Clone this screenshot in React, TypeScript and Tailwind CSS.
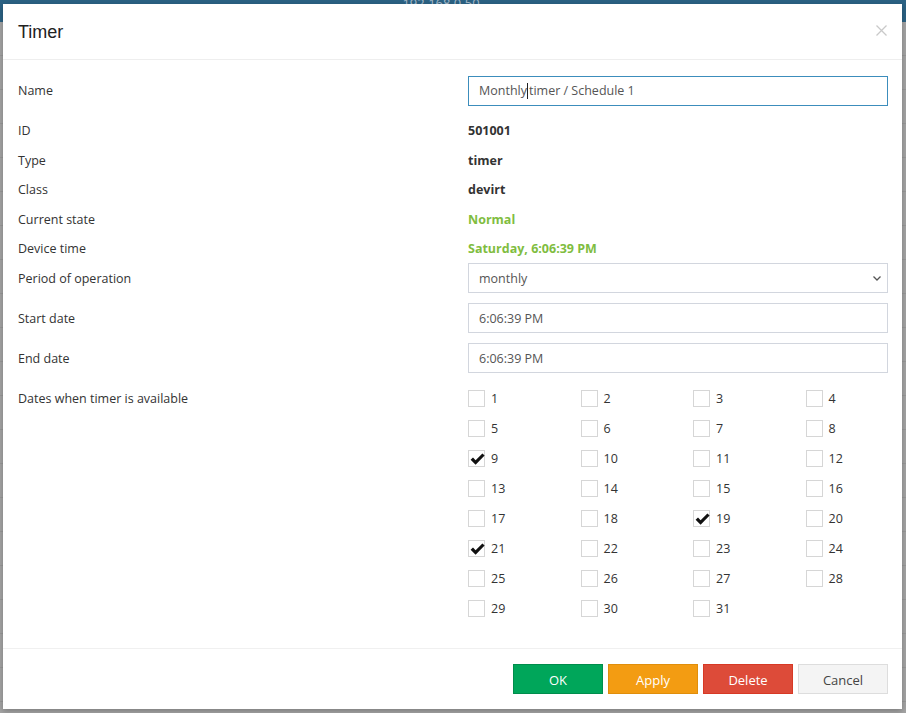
import React from "react";

const checked = new Set([9, 19, 21]);

function Check() {
  return (
    <svg width="15" height="13" viewBox="0 0 15 13" className="absolute left-[1px] top-[2px]">
      <path d="M0.6 6.8 L3 4.4 L5.6 7.2 L12.4 0.4 L14.6 2.6 L5.6 11.8 Z" fill="#111" />
    </svg>
  );
}

function Box({ n }: { n: number }) {
  const on = checked.has(n);
  return (
    <div className="flex h-[30px] items-center">
      <div className="relative h-[17px] w-[17px] shrink-0 border border-[#d6d6d6] bg-white">{on && <Check />}</div>
      <span className="ml-[6px] pt-[2px] text-[12.5px] text-[#333]">{n}</span>
    </div>
  );
}

function TextRow({ label, value, green }: { label: string; value: string; green?: boolean }) {
  return (
    <div className="flex h-[29.5px] items-center pt-[4px]">
      <div className="w-[450px] shrink-0 text-[#333]">{label}</div>
      <div className={"font-bold " + (green ? "text-[#80bd3f]" : "text-[#333]")}>{value}</div>
    </div>
  );
}

export default function App() {
  const days = Array.from({ length: 31 }, (_, i) => i + 1);
  return (
    <div className="relative h-[713px] w-[906px] overflow-hidden bg-[#a4a4a4]" style={{ fontFamily: '"Open Sans", "Noto Sans", sans-serif' }}>
      <div className="flex h-[22px] items-start justify-center bg-[#2b6284]">
        <span className="-mt-[6px] -ml-[24px] text-[13px] text-[#a9bccb]">192.168.0.50</span>
      </div>
      <div className="flex flex-col">
        {Array.from({ length: 20 }, (_, i) => (
          <div key={i} className="h-[34px] border-b border-[#989898]" />
        ))}
      </div>

      <div className="absolute left-[3px] top-[4px] flex h-[705px] w-[899px] flex-col bg-white text-[12.5px] shadow-[0_2px_6px_rgba(0,0,0,0.25)]">
        <div className="flex h-[56px] items-center justify-between border-b border-[#eeeeee] pl-[15px] pr-[15px]">
          <span className="pt-[2px] text-[18px] text-[#222]" style={{ fontFamily: '"Liberation Sans", Arial, sans-serif' }}>Timer</span>
          <svg width="11" height="11" viewBox="0 0 11 11" className="-mt-[2px]">
            <path d="M0.5 0.5 L10.5 10.5 M10.5 0.5 L0.5 10.5" stroke="#c9c9c9" strokeWidth="1.3" />
          </svg>
        </div>

        <div className="flex-1 pl-[15px] pr-[14px] pt-[16px]">
          <div className="mb-[9px] flex h-[30px] items-center">
            <div className="w-[450px] shrink-0 text-[#333]">Name</div>
            <div className="flex h-[30px] w-[420px] items-center border border-[#3c8dbc] px-[10px] text-[#555]">
              Monthly<span className="mx-[0.5px] inline-block h-[16px] w-px bg-[#222]" />timer / Schedule 1
            </div>
          </div>
          <TextRow label="ID" value="501001" />
          <TextRow label="Type" value="timer" />
          <TextRow label="Class" value="devirt" />
          <TextRow label="Current state" value="Normal" green />
          <TextRow label="Device time" value="Saturday, 6:06:39 PM" green />

          <div className="flex h-[30px] items-center">
            <div className="w-[450px] shrink-0 pt-[4px] text-[#333]">Period of operation</div>
            <div className="flex h-[30px] w-[420px] items-center justify-between border border-[#d2d6de] pl-[10px] pr-[4px] text-[#555]">
              <span className="pt-[4px]">monthly</span>
              <svg width="12" height="12" viewBox="0 0 12 12">
                <path d="M2.5 4.5 L6 8 L9.5 4.5" fill="none" stroke="#555" strokeWidth="1.3" />
              </svg>
            </div>
          </div>
          <div className="mt-[10px] flex h-[30px] items-center">
            <div className="w-[450px] shrink-0 pt-[4px] text-[#333]">Start date</div>
            <div className="flex h-[30px] w-[420px] items-center border border-[#d2d6de] px-[10px] pt-[4px] text-[#555]">6:06:39 PM</div>
          </div>
          <div className="mt-[10px] flex h-[30px] items-center">
            <div className="w-[450px] shrink-0 pt-[4px] text-[#333]">End date</div>
            <div className="flex h-[30px] w-[420px] items-center border border-[#d2d6de] px-[10px] pt-[4px] text-[#555]">6:06:39 PM</div>
          </div>

          <div className="mt-[11px] flex">
            <div className="flex h-[30px] w-[450px] shrink-0 items-center pt-[2px] text-[#333]">Dates when timer is available</div>
            <div className="grid grid-cols-[repeat(4,112.5px)]">
              {days.map((d) => (
                <Box key={d} n={d} />
              ))}
            </div>
          </div>
        </div>

        <div className="flex h-[61px] items-center justify-end gap-[5px] border-t border-[#f0f0f0] pr-[14px] text-[13px]">
          <button className="h-[30px] w-[90px] border border-[#008d4c] bg-[#00a65a] pt-[3px] text-white">OK</button>
          <button className="h-[30px] w-[90px] border border-[#e08e0b] bg-[#f39c12] pt-[3px] text-white">Apply</button>
          <button className="h-[30px] w-[90px] border border-[#d73925] bg-[#dd4b39] pt-[3px] text-white">Delete</button>
          <button className="h-[30px] w-[90px] border border-[#dddddd] bg-[#f4f4f4] pt-[3px] text-[#444]">Cancel</button>
        </div>
      </div>
    </div>
  );
}
